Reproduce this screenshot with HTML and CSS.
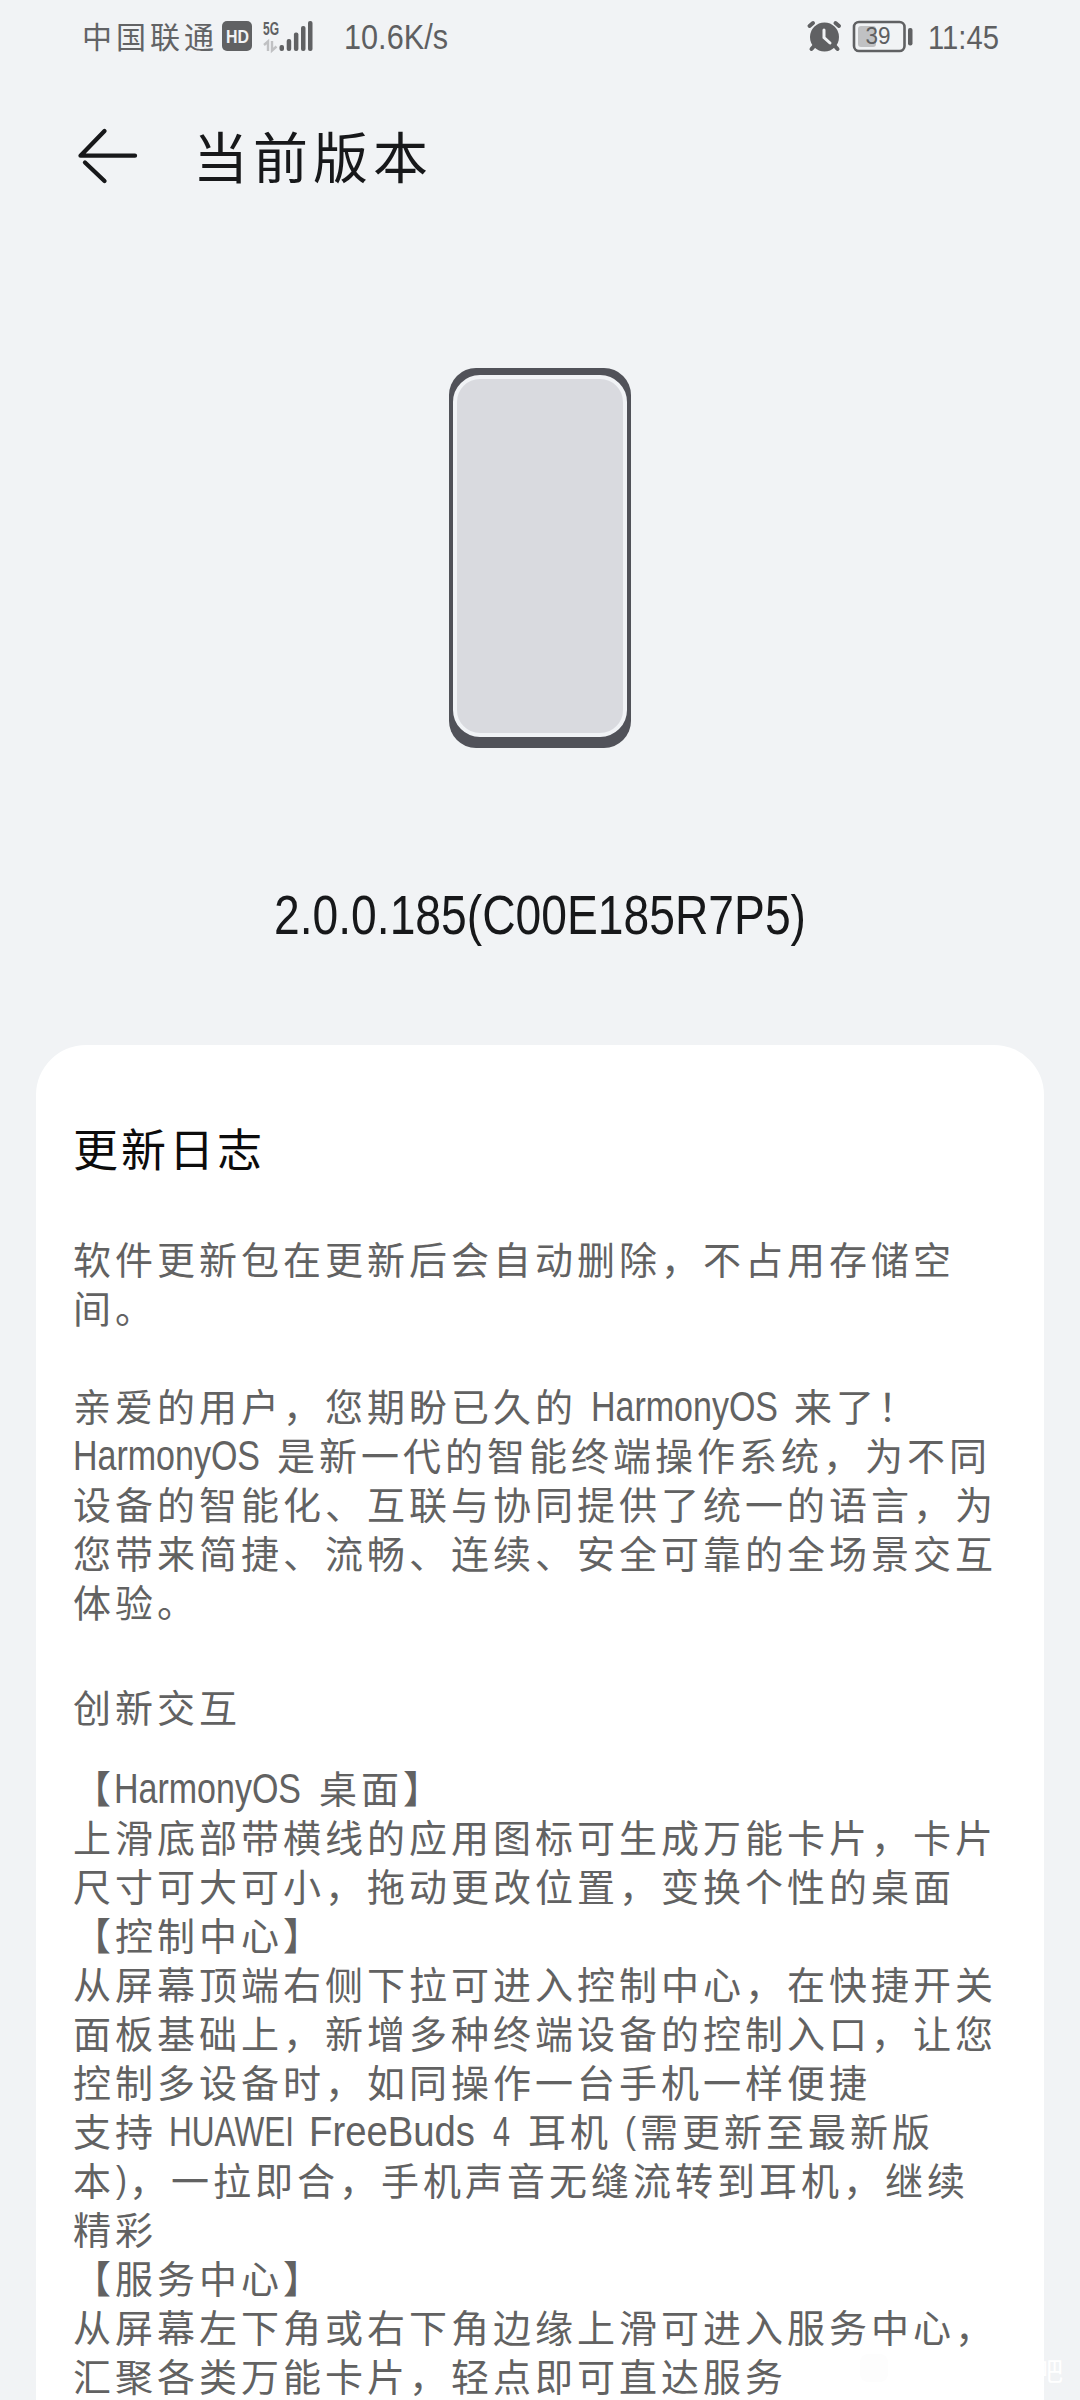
FILE: index.html
```html
<!DOCTYPE html>
<html lang="zh-CN">
<head>
<meta charset="utf-8">
<title>当前版本</title>
<link rel="stylesheet" href="styles.css">
</head>
<body>
<div class="screen">
  <header class="status">
    <span class="carrier">中国联通</span>
    <svg class="signal" width="92" height="34" viewBox="222 19 92 34">
      <rect x="222" y="21" width="30" height="30" rx="5" fill="#606163"/>
      <text x="226" y="43" font-size="19" font-weight="700" fill="#f1f3f5" textLength="23" lengthAdjust="spacingAndGlyphs">HD</text>
      <text x="263" y="34.500" font-size="18" font-weight="700" fill="#606163" textLength="16" lengthAdjust="spacingAndGlyphs">5G</text>
      <g stroke="#c0c1c3" stroke-width="2.400" fill="none"><path d="M264 45l4-3.500V51M272 41v9.500l4.500-4"/></g>
      <g fill="#606163">
        <rect x="279.500" y="45" width="4.500" height="6" rx="2"/>
        <rect x="286.700" y="39" width="4.500" height="12" rx="2"/>
        <rect x="293.900" y="32.500" width="4.500" height="18.500" rx="2"/>
        <rect x="301" y="26" width="4.500" height="25" rx="2"/>
        <rect x="308" y="21" width="4.500" height="30" rx="2"/>
      </g>
    </svg>
    <svg class="speed" width="106" height="44" viewBox="344 14 106 44">
      <text x="344" y="49" font-size="35" fill="#5e5f61" textLength="104" lengthAdjust="spacingAndGlyphs">10.6K/s</text>
    </svg>
    <svg class="power" width="194" height="44" viewBox="806 14 194 44">
      <circle cx="824.500" cy="37" r="14.500" fill="#606163"/>
      <path d="M809.500 26l3.500-3M839 26l-3.500-3M815 45l-3.500 4M834 45l3.500 4" stroke="#606163" stroke-width="4" stroke-linecap="round" fill="none"/>
      <path d="M824 30v7.500l6 5.500" fill="none" stroke="#f1f3f5" stroke-width="3" stroke-linecap="round"/>
      <rect x="854" y="22" width="50.500" height="29" rx="5" fill="none" stroke="#606163" stroke-width="2.600"/>
      <rect x="858" y="26" width="18" height="21" rx="3" fill="#c0c1c3"/>
      <rect x="908" y="28" width="4.500" height="17.500" rx="2" fill="#606163"/>
      <text x="865.500" y="44" font-size="24" fill="#5e5f61" textLength="25" lengthAdjust="spacingAndGlyphs">39</text>
      <text x="928" y="49" font-size="34" fill="#5e5f61" textLength="71" lengthAdjust="spacingAndGlyphs">11:45</text>
    </svg>
  </header>

  <div class="titlebar">
    <svg width="62" height="60" viewBox="77 126 62 60" fill="none" stroke="#17181a" stroke-width="4.300" stroke-linecap="round" stroke-linejoin="round">
      <path d="M135 155.700H80.500L104.500 131M85 162.500L104.500 181"/>
    </svg>
    <h1>当前版本</h1>
  </div>

  <div class="phone"><div class="glass"></div></div>

  <svg class="version" width="540" height="70" viewBox="270 880 540 70" fill="#17181a" font-size="56">
    <text x="274" y="933.500" textLength="532" lengthAdjust="spacingAndGlyphs">2.0.0.185(C00E185R7P5)</text>
  </svg>

  <main class="card">
    <h2>更新日志</h2>
    <section>
      <p>软件更新包在更新后会自动删除，不占用存储空</p>
      <p>间。</p>
    </section>
    <section>
      <p>亲爱的用户，您期盼已久的<svg class="word" width="217" height="30"><text x="14" y="30" textLength="187" lengthAdjust="spacingAndGlyphs">HarmonyOS</text></svg>来了！</p>
      <p><svg class="word" width="204" height="30"><text y="30" textLength="187" lengthAdjust="spacingAndGlyphs">HarmonyOS</text></svg>是新一代的智能终端操作系统，为不同</p>
      <p>设备的智能化、互联与协同提供了统一的语言，为</p>
      <p>您带来简捷、流畅、连续、安全可靠的全场景交互</p>
      <p>体验。</p>
    </section>
    <section class="topic">
      <p>创新交互</p>
    </section>
    <section class="details">
      <p>【<svg class="word" width="204" height="30"><text x="-1" y="30" textLength="187" lengthAdjust="spacingAndGlyphs">HarmonyOS</text></svg>桌面】</p>
      <p>上滑底部带横线的应用图标可生成万能卡片，卡片</p>
      <p>尺寸可大可小，拖动更改位置，变换个性的桌面</p>
      <p>【控制中心】</p>
      <p>从屏幕顶端右侧下拉可进入控制中心，在快捷开关</p>
      <p>面板基础上，新增多种终端设备的控制入口，让您</p>
      <p>控制多设备时，如同操作一台手机一样便捷</p>
      <p>支持<svg class="word" width="371" height="30"><text x="12" y="30" textLength="125" lengthAdjust="spacingAndGlyphs">HUAWEI</text><text x="152" y="30" textLength="166" lengthAdjust="spacingAndGlyphs">FreeBuds</text><text x="336" y="30" textLength="17" lengthAdjust="spacingAndGlyphs">4</text></svg>耳机<svg class="word" width="28" height="30"><text class="paren" x="13" y="27" textLength="11" lengthAdjust="spacingAndGlyphs">(</text></svg>需更新至最新版</p>
      <p>本<svg class="word" width="14" height="30"><text class="paren" x="1" y="27" textLength="11" lengthAdjust="spacingAndGlyphs">)</text></svg>，一拉即合，手机声音无缝流转到耳机，继续</p>
      <p>精彩</p>
      <p>【服务中心】</p>
      <p>从屏幕左下角或右下角边缘上滑可进入服务中心，</p>
      <p>汇聚各类万能卡片，轻点即可直达服务</p>
    </section>
  </main>
  <div class="watermark"><i></i><span>吧</span></div>
</div>
</body>
</html>
```
FILE: styles.css
```css
* { box-sizing: border-box; margin: 0; padding: 0; }

body {
  background: #f1f3f5;
  font-family: "Noto Sans CJK SC", sans-serif;
}

.screen {
  position: relative;
  display: flex;
  flex-direction: column;
  width: 1080px;
  height: 2400px;
  overflow: hidden;
}

.screen > * { flex: none; }

svg { display: block; flex: none; overflow: visible; }
svg text { font-family: "Liberation Sans", sans-serif; }

.status {
  display: flex;
  align-items: center;
  height: 72px;
  padding: 0 80px 0 82px;
}

.carrier {
  width: 140px;
  margin-top: -2px;
  color: #626365;
  font-size: 30px;
  font-weight: 400;
  letter-spacing: 4px;
  line-height: 34px;
  white-space: nowrap;
}

.speed { margin-left: 30px; }
.power { margin-left: auto; }

.titlebar {
  display: flex;
  align-items: center;
  gap: 54px;
  height: 168px;
  padding: 0 77px;
}

h1 {
  margin-top: -5px;
  color: #17181a;
  font-size: 55px;
  font-weight: 400;
  letter-spacing: 5px;
  line-height: 64px;
}

.phone {
  align-self: center;
  width: 182px;
  height: 380px;
  margin-top: 128px;
  padding: 7px 4px 11px;
  border-radius: 27px;
  background: #515259;
}

.glass {
  height: 362px;
  border: 4px solid #f1f3f6;
  border-radius: 27px;
  background: #d9dadf;
}

.version { align-self: center; margin-top: 132px; }

.card {
  height: 1355px;
  margin: 95px 36px 0;
  padding: 71px 37px 0;
  border-radius: 50px 50px 0 0;
  background: #fff;
  color: #626262;
  overflow: hidden;
}

h2 {
  margin-bottom: 53px;
  color: #0c0c0c;
  font-size: 45px;
  font-weight: 400;
  letter-spacing: 3px;
  line-height: 64px;
}

section { margin-bottom: 49px; }
section.topic { margin: 56px 0 32px; }
section.details { margin-bottom: 0; }

p {
  height: 49px;
  font-size: 38px;
  font-weight: 400;
  letter-spacing: 4px;
  line-height: 49px;
  white-space: nowrap;
}

.word {
  display: inline-block;
  vertical-align: baseline;
  fill: #626262;
  font-size: 42px;
  letter-spacing: 0;
}

.paren { font-size: 36px; }

.watermark {
  position: absolute;
  left: 860px;
  top: 2354px;
  display: flex;
  justify-content: space-between;
  width: 203px;
  height: 32px;
  color: #fff;
  font-size: 26px;
  line-height: 32px;
}

.watermark i {
  width: 28px;
  height: 28px;
  border-radius: 8px;
  background: #fdfdfd;
}
```
